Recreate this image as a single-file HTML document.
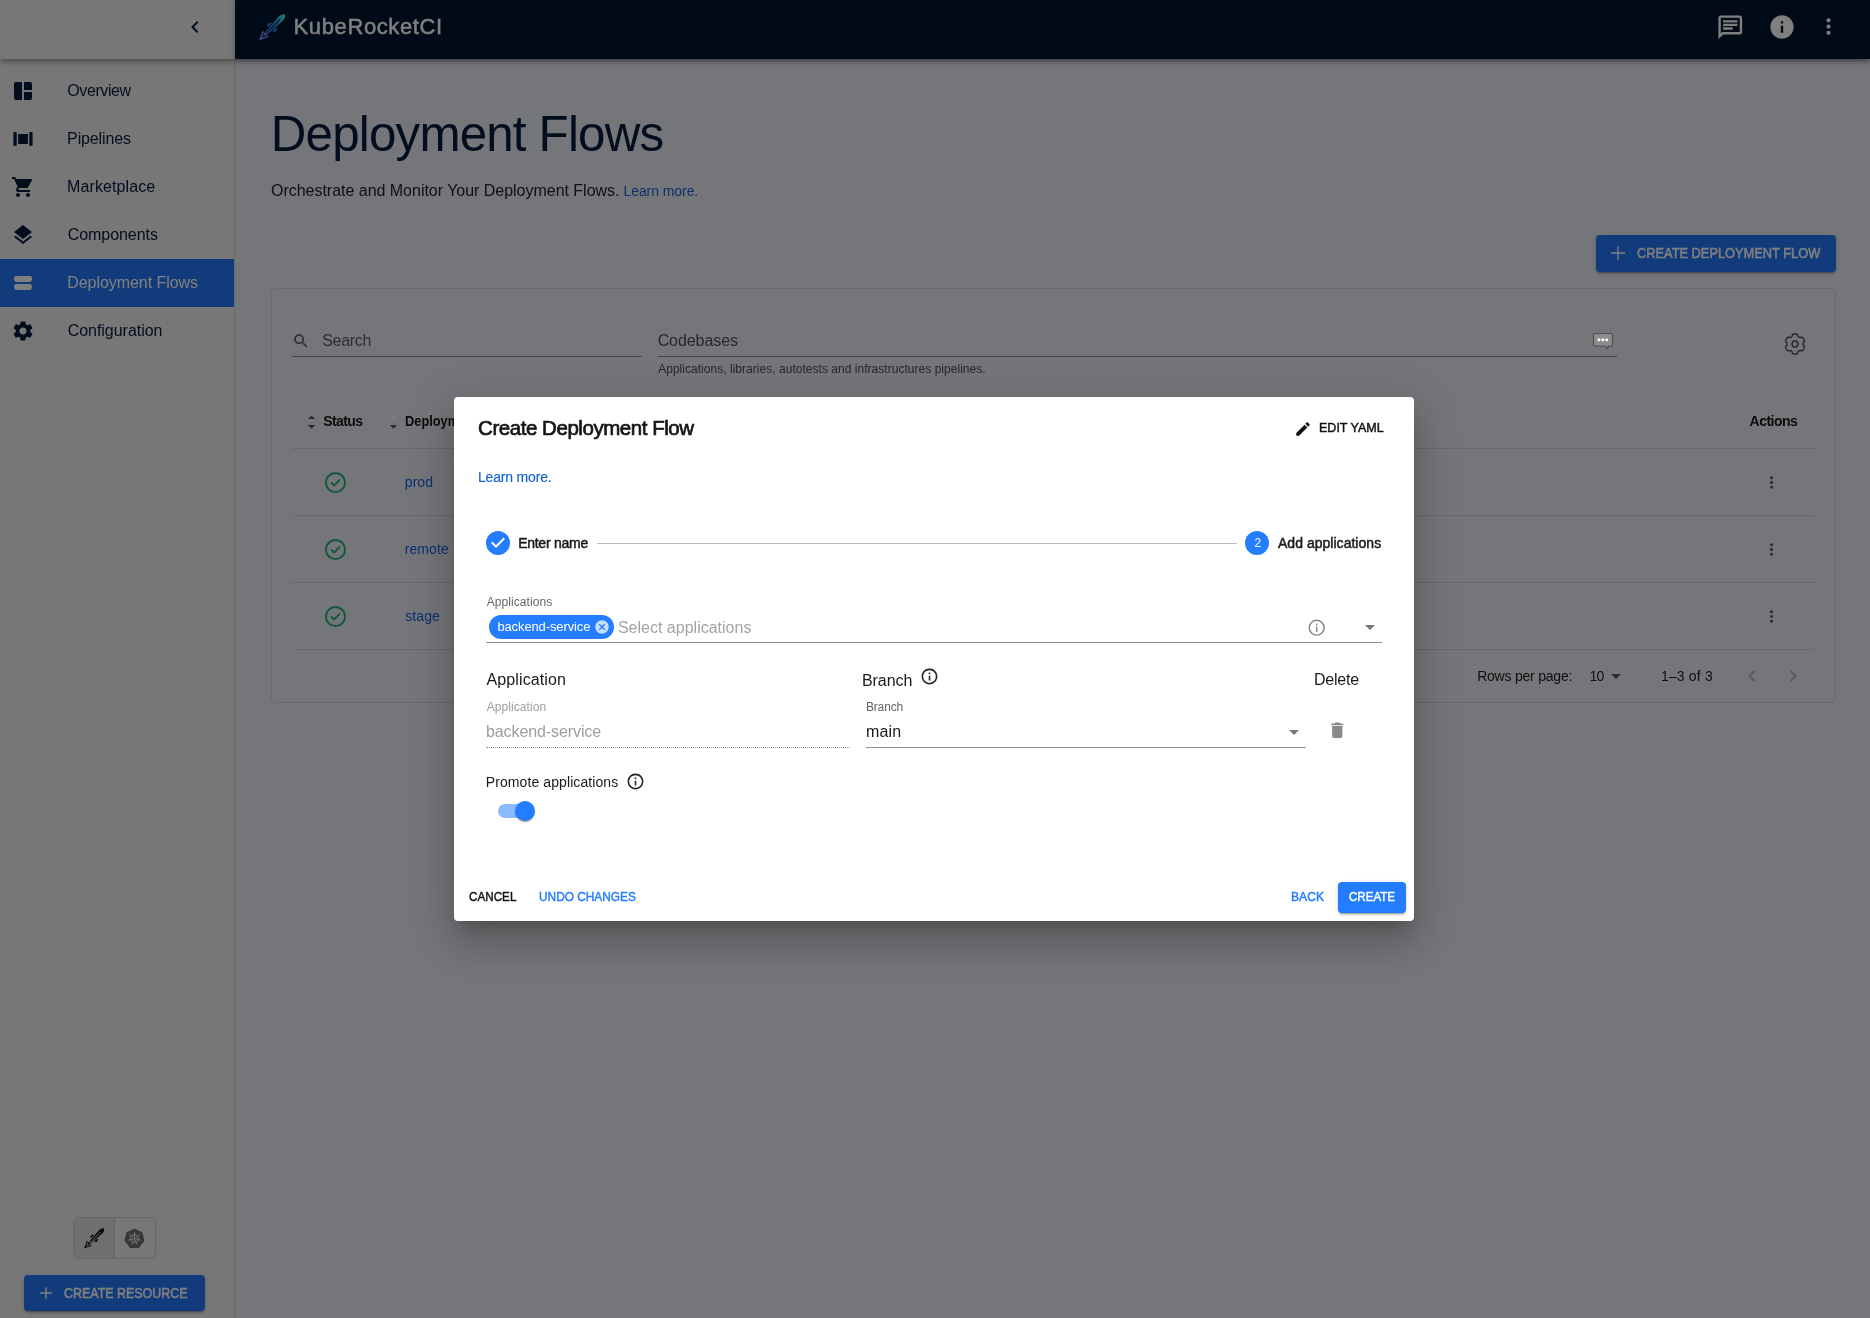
<!DOCTYPE html>
<html lang="en"><head><meta charset="utf-8"><title>KubeRocketCI - Deployment Flows</title>
<style>
html,body{margin:0;padding:0}
body{width:1870px;height:1318px;overflow:hidden;position:relative;font-family:"Liberation Sans",Arial,sans-serif;background:#eaecf3}
.b{position:absolute;display:block}
.t{position:absolute;white-space:nowrap;line-height:1;display:block}
#base,#top,#over{position:absolute;left:0;top:0;width:1870px;height:1318px;overflow:hidden;will-change:transform}
#backdrop{position:absolute;left:0;top:0;width:1870px;height:1318px;background:rgba(0,0,0,.5)}
</style></head>
<body>
<div id="base">
<div class="b" style="left:0px;top:0px;width:1870px;height:1318px;background:#eaecf3;"></div>
<div class="b" style="left:0px;top:0px;width:235px;height:1318px;background:#efefef;border-right:1px solid #d2d2d2;box-sizing:border-box;"></div>
<div class="b" style="left:0px;top:259px;width:234px;height:48px;background:#2476f6;"></div>
<span class="t" id="t1" style="left:67.22px;top:82.76px;font-size:16px;color:#041c3a;letter-spacing:-0.393px;">Overview</span>
<span class="t" id="t2" style="left:67.10px;top:130.76px;font-size:16px;color:#041c3a;letter-spacing:-0.124px;">Pipelines</span>
<span class="t" id="t3" style="left:67.10px;top:178.76px;font-size:16px;color:#041c3a;letter-spacing:0.092px;">Marketplace</span>
<span class="t" id="t4" style="left:67.68px;top:226.76px;font-size:16px;color:#041c3a;letter-spacing:-0.049px;">Components</span>
<span class="t" id="t5" style="left:67.23px;top:274.76px;font-size:16px;color:#fff;letter-spacing:-0.057px;">Deployment Flows</span>
<span class="t" id="t6" style="left:67.68px;top:322.76px;font-size:16px;color:#041c3a;letter-spacing:-0.033px;">Configuration</span>
<svg class="b" style="left:11.00px;top:79.00px;" width="24" height="24" viewBox="0 0 24 24"><path fill="#041c3a" d="M5 3h6v18H5a2 2 0 0 1-2-2V5a2 2 0 0 1 2-2zM13 3h6a2 2 0 0 1 2 2v6h-8zM13 13h8v6a2 2 0 0 1-2 2h-6z"/></svg>
<svg class="b" style="left:11.00px;top:127.00px;" width="24" height="24" viewBox="0 0 24 24"><g fill="#041c3a"><rect x="2.4" y="5" width="3.3" height="14" rx="1.3"/><rect x="7.2" y="7" width="9.7" height="10"/><rect x="18.3" y="5" width="3.3" height="14" rx="1.3"/></g></svg>
<svg class="b" style="left:11.00px;top:175.00px;" width="24" height="24" viewBox="0 0 24 24"><path fill="#041c3a" d="M7 18c-1.1 0-1.99.9-1.99 2S5.9 22 7 22s2-.9 2-2-.9-2-2-2zM1 2v2h2l3.6 7.59-1.35 2.45c-.16.28-.25.61-.25.96 0 1.1.9 2 2 2h12v-2H7.42c-.14 0-.25-.11-.25-.25l.03-.12.9-1.63h7.45c.75 0 1.41-.41 1.75-1.03l3.58-6.49c.08-.14.12-.31.12-.48 0-.55-.45-1-1-1H5.21l-.94-2H1zm16 16c-1.1 0-1.99.9-1.99 2s.89 2 1.99 2 2-.9 2-2-.9-2-2-2z"/></svg>
<svg class="b" style="left:11.00px;top:223.00px;" width="24" height="24" viewBox="0 0 24 24"><path fill="#041c3a" d="m11.99 18.54-7.37-5.73L3 14.07l9 7 9-7-1.63-1.27-7.38 5.74zM12 16l7.36-5.73L21 9l-9-7-9 7 1.63 1.27L12 16z"/></svg>
<svg class="b" style="left:11.00px;top:271.00px;" width="24" height="24" viewBox="0 0 24 24"><g fill="#fff"><rect x="3" y="5" width="18" height="6" rx="2.4"/><rect x="3" y="13" width="18" height="6" rx="2.4"/></g></svg>
<svg class="b" style="left:11.00px;top:319.00px;" width="24" height="24" viewBox="0 0 24 24"><path fill="#041c3a" d="M19.14 12.94c.04-.3.06-.61.06-.94 0-.32-.02-.64-.07-.94l2.03-1.58c.18-.14.23-.41.12-.61l-1.92-3.32c-.12-.22-.37-.29-.59-.22l-2.39.96c-.5-.38-1.03-.7-1.62-.94l-.36-2.54c-.04-.24-.24-.41-.48-.41h-3.84c-.24 0-.43.17-.47.41l-.36 2.54c-.59.24-1.13.57-1.62.94l-2.39-.96c-.22-.08-.47 0-.59.22L2.74 8.87c-.12.21-.08.47.12.61l2.03 1.58c-.05.3-.09.63-.09.94s.02.64.07.94l-2.03 1.58c-.18.14-.23.41-.12.61l1.92 3.32c.12.22.37.29.59.22l2.39-.96c.5.38 1.03.7 1.62.94l.36 2.54c.05.24.24.41.48.41h3.84c.24 0 .44-.17.47-.41l.36-2.54c.59-.24 1.13-.56 1.62-.94l2.39.96c.22.08.47 0 .59-.22l1.92-3.32c.12-.22.07-.47-.12-.61l-2.01-1.58zM12 15.6c-1.98 0-3.6-1.62-3.6-3.6s1.62-3.6 3.6-3.6 3.6 1.62 3.6 3.6-1.62 3.6-3.6 3.6z"/></svg>
<div class="b" style="left:73px;top:1217px;width:83px;height:42px;border:1px solid #d0d0d0;border-radius:5px;box-sizing:border-box;overflow:hidden;"><div class="b" style="left:0;top:0;width:40px;height:40px;background:#dedede;border-right:1px solid #cfcfcf"></div></div>
<svg class="b" style="left:83.70px;top:1227.80px;" width="20.5" height="20.5" viewBox="-50 -50 100 100"><g transform="rotate(45)" fill="#161616" fill-rule="evenodd"><path d="M0 -69 C8 -63 11 -55 11 -46 L6 27 L-6 27 L-11 -46 C-11 -55 -8 -63 0 -69 Z M-1.6 -42 L-1.6 27 L1.6 27 L1.6 -42 Z"/><path d="M-12 -12 L-20 -4 L-20 9 L-10.5 9 Z M12 -12 L20 -4 L20 9 L10.5 9 Z"/><path d="M-17 34 L0 70 L17 34 L10 34 L0 57 L-10 34 Z"/><path d="M-8 30 L0 49 L8 30 Z"/></g></svg>
<svg class="b" style="left:124.00px;top:1227.50px;" width="21" height="21" viewBox="-56 -54 112 112"><polygon points="0.0,-47.0 39.1,-28.2 48.7,14.1 21.7,48.0 -21.7,48.0 -48.7,14.1 -39.1,-28.2" fill="#6e6e6e" stroke="#6e6e6e" stroke-width="8" stroke-linejoin="round"/><g stroke="#efefef" stroke-width="5" fill="none" stroke-linecap="round"><circle cx="0" cy="3" r="22"/><line x1="0.0" y1="-5.0" x2="0.0" y2="-31.0"/><line x1="6.3" y1="-2.0" x2="26.6" y2="-18.2"/><line x1="7.8" y1="4.8" x2="33.1" y2="10.6"/><line x1="3.5" y1="10.2" x2="14.8" y2="33.6"/><line x1="-3.5" y1="10.2" x2="-14.8" y2="33.6"/><line x1="-7.8" y1="4.8" x2="-33.1" y2="10.6"/><line x1="-6.3" y1="-2.0" x2="-26.6" y2="-18.2"/></g><circle cx="0" cy="3" r="5" fill="#efefef"/></svg>
<div class="b" style="left:24px;top:1275px;width:181px;height:36px;background:#2476f6;border-radius:4px;box-shadow:0 3px 1px -2px rgba(0,0,0,.2),0 2px 2px 0 rgba(0,0,0,.14),0 1px 5px 0 rgba(0,0,0,.12);"></div>
<svg class="b" style="left:38.00px;top:1285.00px;" width="16" height="16" viewBox="0 0 16 16"><path d="M8 2.2v11.6M2.2 8h11.6" stroke="#fff" stroke-width="1.4" fill="none"/></svg>
<span class="t" id="t7" style="left:64.10px;top:1286.15px;font-size:14px;color:#fff;-webkit-text-stroke:0.48px currentColor;transform:scaleX(0.8891);transform-origin:0 0;">CREATE RESOURCE</span>
<div class="b" style="left:0px;top:0px;width:1870px;height:59px;box-shadow:0 2px 4px -1px rgba(0,0,0,.2),0 4px 5px 0 rgba(0,0,0,.14),0 1px 10px 0 rgba(0,0,0,.12);"><div class="b" style="left:0;top:0;width:235px;height:59px;background:#efefef"></div><div class="b" style="left:235px;top:0;width:1635px;height:59px;background:#00162f;box-shadow:-1px 0 5px rgba(0,0,0,.22)"></div></div>
<svg class="b" style="left:183.30px;top:15.30px;" width="24" height="24" viewBox="0 0 24 24"><path fill="#041c3a" d="M15.41 7.41 14 6l-6 6 6 6 1.41-1.41L10.83 12z"/></svg>
<svg class="b" style="left:258.80px;top:13.80px;" width="26.5" height="26.5" viewBox="-50 -50 100 100"><defs><linearGradient id="rg" gradientUnits="userSpaceOnUse" x1="0" y1="-66" x2="0" y2="66"><stop offset="0" stop-color="#3ff0e6"/><stop offset="0.5" stop-color="#2b7cf0"/><stop offset="1" stop-color="#a48cff"/></linearGradient></defs><g transform="rotate(45)" fill="url(#rg)" fill-rule="evenodd"><path d="M0 -69 C8 -63 11 -55 11 -46 L6 27 L-6 27 L-11 -46 C-11 -55 -8 -63 0 -69 Z M-1.6 -42 L-1.6 27 L1.6 27 L1.6 -42 Z"/><path d="M-12 -12 L-20 -4 L-20 9 L-10.5 9 Z M12 -12 L20 -4 L20 9 L10.5 9 Z"/><path d="M-17 34 L0 70 L17 34 L10 34 L0 57 L-10 34 Z"/><path d="M-8 30 L0 49 L8 30 Z"/></g></svg>
<span class="t" id="t8" style="left:293.60px;top:15.78px;font-size:22px;color:#fff;letter-spacing:0.604px;-webkit-text-stroke:0.45px #fff;">KubeRocketCI</span>
<svg class="b" style="left:1715.55px;top:13.15px;" width="28.5" height="28.5" viewBox="0 0 24 24"><path fill="#fff" d="M4 4h16v12H5.17L4 17.17V4m0-2c-1.1 0-1.99.9-1.99 2L2 22l4-4h14c1.1 0 2-.9 2-2V4c0-1.1-.9-2-2-2H4zm2 10h8v2H6v-2zm0-3h12v2H6V9zm0-3h12v2H6V6z"/></svg>
<svg class="b" style="left:1767.70px;top:13.00px;" width="28" height="28" viewBox="0 0 24 24"><path fill="#fff" d="M12 2C6.48 2 2 6.48 2 12s4.48 10 10 10 10-4.48 10-10S17.52 2 12 2zm1 15h-2v-6h2v6zm0-8h-2V7h2v2z"/></svg>
<svg class="b" style="left:1815.80px;top:13.90px;" width="25" height="25" viewBox="0 0 24 24"><path fill="#fff" d="M12 8c1.1 0 2-.9 2-2s-.9-2-2-2-2 .9-2 2 .9 2 2 2zm0 2c-1.1 0-2 .9-2 2s.9 2 2 2 2-.9 2-2-.9-2-2-2zm0 6c-1.1 0-2 .9-2 2s.9 2 2 2 2-.9 2-2-.9-2-2-2z"/></svg>
<span class="t" id="t9" style="left:270.83px;top:109.27px;font-size:49.3px;color:#041c3a;letter-spacing:-0.815px;">Deployment Flows</span>
<span class="t" id="t10" style="left:271.02px;top:183.26px;font-size:16px;color:#222;letter-spacing:-0.023px;">Orchestrate and Monitor Your Deployment Flows.</span>
<span class="t" id="t11" style="left:623.47px;top:184.15px;font-size:14px;color:#1b5fe0;letter-spacing:-0.072px;">Learn more.</span>
<div class="b" style="left:1596px;top:235px;width:240px;height:37px;background:#2476f6;border-radius:4px;box-shadow:0 3px 1px -2px rgba(0,0,0,.2),0 2px 2px 0 rgba(0,0,0,.14),0 1px 5px 0 rgba(0,0,0,.12);"></div>
<svg class="b" style="left:1609.70px;top:245.30px;" width="16" height="16" viewBox="0 0 16 16"><path d="M8 1v14M1 8h14" stroke="#fff" stroke-width="1.3" fill="none"/></svg>
<span class="t" id="t12" style="left:1637.06px;top:246.45px;font-size:14px;color:#fff;-webkit-text-stroke:0.48px currentColor;transform:scaleX(0.9154);transform-origin:0 0;">CREATE DEPLOYMENT FLOW</span>
<div class="b" style="left:271px;top:288px;width:1565px;height:415px;border:1px solid #d3d5db;border-radius:5px;box-sizing:border-box;"></div>
<svg class="b" style="left:291.50px;top:332.00px;" width="18" height="18" viewBox="0 0 24 24"><path fill="#555" d="M15.5 14h-.79l-.28-.27C15.41 12.59 16 11.11 16 9.5 16 5.91 13.09 3 9.5 3S3 5.91 3 9.5 5.91 16 9.5 16c1.61 0 3.09-.59 4.23-1.57l.27.28v.79l5 4.99L20.49 19l-4.99-5zm-6 0C7.01 14 5 11.99 5 9.5S7.01 5 9.5 5 14 7.01 14 9.5 11.99 14 9.5 14z"/></svg>
<span class="t" id="t13" style="left:322.15px;top:333.06px;font-size:16px;color:#5c5c5e;letter-spacing:-0.274px;">Search</span>
<div class="b" style="left:292px;top:356px;width:350px;height:1px;background:#878a8f;"></div>
<span class="t" id="t14" style="left:657.63px;top:333.36px;font-size:16px;color:#505154;letter-spacing:-0.069px;">Codebases</span>
<div class="b" style="left:658px;top:356px;width:959px;height:1px;background:#878a8f;"></div>
<span class="t" id="t15" style="left:658.16px;top:363.04px;font-size:12px;color:#4c4d50;letter-spacing:0.031px;">Applications, libraries, autotests and infrastructures pipelines.</span>
<svg class="b" style="left:1782.00px;top:330.90px;" width="26" height="26" viewBox="-13 -13 26 26"><g fill="none" stroke="#4a4a4c" stroke-width="1.4" stroke-linejoin="round"><path d="M8.02 0.00 L8.03 0.28 L8.04 0.56 L8.07 0.85 L8.16 1.15 L8.35 1.47 L8.67 1.84 L9.05 2.26 L9.31 2.67 L9.40 3.05 L9.37 3.41 L9.28 3.75 L9.16 4.08 L9.02 4.40 L8.87 4.71 L8.70 5.02 L8.51 5.32 L8.32 5.61 L8.11 5.90 L7.89 6.17 L7.64 6.41 L7.35 6.61 L6.97 6.73 L6.48 6.71 L5.93 6.59 L5.45 6.49 L5.07 6.49 L4.77 6.57 L4.51 6.68 L4.26 6.81 L4.01 6.95 L3.77 7.09 L3.53 7.24 L3.30 7.41 L3.09 7.64 L2.90 7.96 L2.74 8.43 L2.57 8.96 L2.34 9.40 L2.06 9.67 L1.73 9.82 L1.39 9.92 L1.05 9.98 L0.70 10.01 L0.35 10.03 L0.00 10.04 L-0.35 10.03 L-0.70 10.01 L-1.05 9.98 L-1.39 9.92 L-1.73 9.82 L-2.06 9.67 L-2.34 9.40 L-2.57 8.96 L-2.74 8.43 L-2.90 7.96 L-3.09 7.64 L-3.30 7.41 L-3.53 7.24 L-3.77 7.09 L-4.01 6.95 L-4.26 6.81 L-4.51 6.68 L-4.77 6.57 L-5.07 6.49 L-5.45 6.49 L-5.93 6.59 L-6.48 6.71 L-6.97 6.73 L-7.35 6.61 L-7.64 6.41 L-7.89 6.17 L-8.11 5.90 L-8.32 5.61 L-8.51 5.32 L-8.70 5.02 L-8.87 4.71 L-9.02 4.40 L-9.16 4.08 L-9.28 3.75 L-9.37 3.41 L-9.40 3.05 L-9.31 2.67 L-9.05 2.26 L-8.67 1.84 L-8.35 1.47 L-8.16 1.15 L-8.07 0.85 L-8.04 0.56 L-8.03 0.28 L-8.02 0.00 L-8.03 -0.28 L-8.04 -0.56 L-8.07 -0.85 L-8.16 -1.15 L-8.35 -1.47 L-8.67 -1.84 L-9.05 -2.26 L-9.31 -2.67 L-9.40 -3.05 L-9.37 -3.41 L-9.28 -3.75 L-9.16 -4.08 L-9.02 -4.40 L-8.87 -4.71 L-8.70 -5.02 L-8.51 -5.32 L-8.32 -5.61 L-8.11 -5.90 L-7.89 -6.17 L-7.64 -6.41 L-7.35 -6.61 L-6.97 -6.73 L-6.48 -6.71 L-5.93 -6.59 L-5.45 -6.49 L-5.07 -6.49 L-4.77 -6.57 L-4.51 -6.68 L-4.26 -6.81 L-4.01 -6.95 L-3.77 -7.09 L-3.53 -7.24 L-3.30 -7.41 L-3.09 -7.64 L-2.90 -7.96 L-2.74 -8.43 L-2.57 -8.96 L-2.34 -9.40 L-2.06 -9.67 L-1.73 -9.82 L-1.39 -9.92 L-1.05 -9.98 L-0.70 -10.01 L-0.35 -10.03 L-0.00 -10.04 L0.35 -10.03 L0.70 -10.01 L1.05 -9.98 L1.39 -9.92 L1.73 -9.82 L2.06 -9.67 L2.34 -9.40 L2.57 -8.96 L2.74 -8.43 L2.90 -7.96 L3.09 -7.64 L3.30 -7.41 L3.53 -7.24 L3.77 -7.09 L4.01 -6.95 L4.26 -6.81 L4.51 -6.68 L4.77 -6.57 L5.07 -6.49 L5.45 -6.49 L5.93 -6.59 L6.48 -6.71 L6.97 -6.73 L7.35 -6.61 L7.64 -6.41 L7.89 -6.17 L8.11 -5.90 L8.32 -5.61 L8.51 -5.32 L8.70 -5.02 L8.87 -4.71 L9.02 -4.40 L9.16 -4.08 L9.28 -3.75 L9.37 -3.41 L9.40 -3.05 L9.31 -2.67 L9.05 -2.26 L8.67 -1.84 L8.35 -1.47 L8.16 -1.15 L8.07 -0.85 L8.04 -0.56 L8.03 -0.28Z"/><circle cx="0" cy="0" r="3"/></g></svg>
<svg class="b" style="left:307.30px;top:414.00px;" width="9" height="16" viewBox="0 0 9 16"><path d="M0.8 5 L4.5 1.4 L8.2 5Z M0.8 11 L4.5 14.7 L8.2 11Z" fill="#55565a"/></svg>
<span class="t" id="t16" style="left:323.16px;top:414.15px;font-size:14px;color:#161616;font-weight:700;letter-spacing:-0.582px;">Status</span>
<svg class="b" style="left:389.30px;top:414.00px;" width="9" height="16" viewBox="0 0 9 16"><path d="M0.8 5 L4.5 1.4 L8.2 5Z" fill="#fbfbfd"/><path d="M0.8 11 L4.5 14.7 L8.2 11Z" fill="#55565a"/></svg>
<span class="t" id="t17" style="left:404.60px;top:414.15px;font-size:14px;color:#161616;font-weight:700;transform:scaleX(0.915);transform-origin:0 0;">Deployment Flow</span>
<span class="t" id="t18" style="left:1749.54px;top:414.45px;font-size:14px;color:#161616;font-weight:700;letter-spacing:-0.500px;">Actions</span>
<div class="b" style="left:292px;top:448px;width:1523px;height:1px;background:#d4d4d4;"></div>
<svg class="b" style="left:323.80px;top:470.70px;" width="23" height="23" viewBox="0 0 24 24"><g fill="none" stroke="#22b17a" stroke-width="2" stroke-linecap="round" stroke-linejoin="round"><circle cx="12" cy="12" r="10"/><path d="M7.9 12.5 L10.5 15.1 L16.1 9.5"/></g></svg>
<span class="t" id="t19" style="left:404.82px;top:475.15px;font-size:14px;color:#1b5fe0;letter-spacing:0.042px;">prod</span>
<svg class="b" style="left:1762.30px;top:472.50px;" width="19" height="19" viewBox="0 0 24 24"><path fill="#56565a" d="M12 8c1.1 0 2-.9 2-2s-.9-2-2-2-2 .9-2 2 .9 2 2 2zm0 2c-1.1 0-2 .9-2 2s.9 2 2 2 2-.9 2-2-.9-2-2-2zm0 6c-1.1 0-2 .9-2 2s.9 2 2 2 2-.9 2-2-.9-2-2-2z"/></svg>
<svg class="b" style="left:323.80px;top:537.70px;" width="23" height="23" viewBox="0 0 24 24"><g fill="none" stroke="#22b17a" stroke-width="2" stroke-linecap="round" stroke-linejoin="round"><circle cx="12" cy="12" r="10"/><path d="M7.9 12.5 L10.5 15.1 L16.1 9.5"/></g></svg>
<span class="t" id="t20" style="left:404.65px;top:542.15px;font-size:14px;color:#1b5fe0;letter-spacing:0.12px;">remote</span>
<svg class="b" style="left:1762.30px;top:539.50px;" width="19" height="19" viewBox="0 0 24 24"><path fill="#56565a" d="M12 8c1.1 0 2-.9 2-2s-.9-2-2-2-2 .9-2 2 .9 2 2 2zm0 2c-1.1 0-2 .9-2 2s.9 2 2 2 2-.9 2-2-.9-2-2-2zm0 6c-1.1 0-2 .9-2 2s.9 2 2 2 2-.9 2-2-.9-2-2-2z"/></svg>
<svg class="b" style="left:323.80px;top:604.70px;" width="23" height="23" viewBox="0 0 24 24"><g fill="none" stroke="#22b17a" stroke-width="2" stroke-linecap="round" stroke-linejoin="round"><circle cx="12" cy="12" r="10"/><path d="M7.9 12.5 L10.5 15.1 L16.1 9.5"/></g></svg>
<span class="t" id="t21" style="left:405.22px;top:609.15px;font-size:14px;color:#1b5fe0;letter-spacing:0.086px;">stage</span>
<svg class="b" style="left:1762.30px;top:606.50px;" width="19" height="19" viewBox="0 0 24 24"><path fill="#56565a" d="M12 8c1.1 0 2-.9 2-2s-.9-2-2-2-2 .9-2 2 .9 2 2 2zm0 2c-1.1 0-2 .9-2 2s.9 2 2 2 2-.9 2-2-.9-2-2-2zm0 6c-1.1 0-2 .9-2 2s.9 2 2 2 2-.9 2-2-.9-2-2-2z"/></svg>
<div class="b" style="left:292px;top:515px;width:1523px;height:1px;background:#d4d4d4;"></div>
<div class="b" style="left:292px;top:582px;width:1523px;height:1px;background:#d4d4d4;"></div>
<div class="b" style="left:294px;top:649px;width:1518px;height:1px;background:#d4d4d4;"></div>
<span class="t" id="t22" style="left:1477.15px;top:668.85px;font-size:14px;color:#222;letter-spacing:-0.215px;">Rows per page:</span>
<span class="t" id="t23" style="left:1589.48px;top:668.85px;font-size:14px;color:#222;letter-spacing:-0.740px;">10</span>
<svg class="b" style="left:1604.20px;top:664.00px;" width="24" height="24" viewBox="0 0 24 24"><path fill="#555" d="m7 10 5 5 5-5z"/></svg>
<span class="t" id="t24" style="left:1660.97px;top:668.85px;font-size:14px;color:#222;letter-spacing:0.160px;">1–3 of 3</span>
<svg class="b" style="left:1740.30px;top:663.80px;" width="24" height="24" viewBox="0 0 24 24"><path fill="#b4b4b4" d="M15.41 16.59 10.83 12l4.58-4.59L14 6l-6 6 6 6 1.41-1.41z"/></svg>
<svg class="b" style="left:1781.00px;top:663.80px;" width="24" height="24" viewBox="0 0 24 24"><path fill="#b4b4b4" d="M8.59 16.59 13.17 12 8.59 7.41 10 6l6 6-6 6-1.41-1.41z"/></svg>
</div>
<div id="backdrop"></div>
<div id="over">
<svg class="b" style="left:1592.00px;top:332.00px;" width="22" height="18" viewBox="0 0 22 18"><path d="M3 1.5h16a1.5 1.5 0 0 1 1.5 1.5v9.5a1.5 1.5 0 0 1-1.5 1.5h-2.5l-1 2.8-1.8-2.8H3a1.5 1.5 0 0 1-1.5-1.5V3A1.5 1.5 0 0 1 3 1.5z" fill="#8c8c8c" stroke="#4e4f52" stroke-width="1.2"/><g fill="#fff"><circle cx="7" cy="7.7" r="1.5"/><circle cx="10.9" cy="7.7" r="1.5"/><circle cx="14.7" cy="7.7" r="1.5"/></g></svg>
</div>
<div id="top">
<div class="b" style="left:454px;top:397px;width:960px;height:524px;background:#fff;border-radius:4px;box-shadow:0 11px 15px -7px rgba(0,0,0,.2),0 24px 38px 3px rgba(0,0,0,.14),0 9px 46px 8px rgba(0,0,0,.12);"></div>
<span class="t" id="t25" style="left:478.10px;top:418.05px;font-size:20.5px;color:#151515;-webkit-text-stroke:0.70px currentColor;letter-spacing:-0.458px;">Create Deployment Flow</span>
<svg class="b" style="left:1294.40px;top:419.80px;" width="18" height="18" viewBox="0 0 24 24"><path fill="#111" d="M3 17.25V21h3.75L17.81 9.94l-3.75-3.75L3 17.25zM20.71 7.04c.39-.39.39-1.02 0-1.41l-2.34-2.34a.9959.9959 0 0 0-1.41 0l-1.83 1.83 3.75 3.75 1.83-1.83z"/></svg>
<span class="t" id="t26" style="left:1319.16px;top:421.00px;font-size:13px;color:#111;-webkit-text-stroke:0.44px currentColor;transform:scaleX(0.9631);transform-origin:0 0;">EDIT YAML</span>
<span class="t" id="t27" style="left:477.99px;top:470.35px;font-size:14px;color:#1161d6;letter-spacing:-0.182px;-webkit-text-stroke:0.15px #1161d6;">Learn more.</span>
<svg class="b" style="left:485.80px;top:531.00px;" width="24" height="24" viewBox="0 0 24 24"><path fill="#247dff" d="M12 0a12 12 0 1 0 0 24 12 12 0 0 0 0-24zm-2 17l-5-5 1.4-1.4 3.6 3.6 7.6-7.6L19 8l-9 9z"/></svg>
<span class="t" id="t28" style="left:518.14px;top:536.45px;font-size:14px;color:#1a1a1a;-webkit-text-stroke:0.48px currentColor;letter-spacing:-0.259px;">Enter name</span>
<div class="b" style="left:597px;top:543px;width:640px;height:1px;background:#bdbdbd;"></div>
<div class="b" style="left:1245px;top:531px;width:24px;height:24px;background:#247dff;border-radius:50%;"></div>
<span class="t" id="t29" style="left:1254.48px;top:537.04px;font-size:12px;color:#fff;">2</span>
<span class="t" id="t30" style="left:1277.97px;top:536.45px;font-size:14px;color:#1a1a1a;-webkit-text-stroke:0.48px currentColor;letter-spacing:0.028px;">Add applications</span>
<span class="t" id="t31" style="left:486.71px;top:596.04px;font-size:12px;color:#666;letter-spacing:0.067px;">Applications</span>
<div class="b" style="left:489px;top:615px;width:125px;height:24px;background:#247dff;border-radius:12px;"></div>
<span class="t" id="t32" style="left:497.39px;top:620.00px;font-size:13px;color:#fff;letter-spacing:-0.112px;">backend-service</span>
<svg class="b" style="left:594.00px;top:618.80px;" width="16" height="16" viewBox="0 0 24 24"><path fill="rgba(255,255,255,.75)" d="M12 2C6.47 2 2 6.47 2 12s4.47 10 10 10 10-4.47 10-10S17.53 2 12 2zm5 13.59L15.59 17 12 13.41 8.41 17 7 15.59 10.59 12 7 8.41 8.41 7 12 10.59 15.59 7 17 8.41 13.41 12 17 15.59z"/></svg>
<span class="t" id="t33" style="left:617.92px;top:619.76px;font-size:16px;color:#a3a3a3;letter-spacing:0.006px;">Select applications</span>
<svg class="b" style="left:1306.90px;top:617.90px;" width="19.4" height="19.4" viewBox="0 0 24 24"><circle cx="12" cy="12" r="9.2" fill="none" stroke="#858585" stroke-width="1.8"/><rect x="11.1" y="10.6" width="1.8" height="6.6" fill="#858585"/><rect x="11.1" y="6.9" width="1.8" height="2" fill="#858585"/></svg>
<svg class="b" style="left:1358.00px;top:615.00px;" width="24" height="24" viewBox="0 0 24 24"><path fill="#757575" d="m7 10 5 5 5-5z"/></svg>
<div class="b" style="left:486px;top:642px;width:896px;height:1px;background:#8f8f8f;"></div>
<span class="t" id="t34" style="left:486.60px;top:671.76px;font-size:16px;color:#1a1a1a;letter-spacing:0.100px;">Application</span>
<span class="t" id="t35" style="left:861.90px;top:672.76px;font-size:16px;color:#1a1a1a;letter-spacing:-0.053px;">Branch</span>
<svg class="b" style="left:919.60px;top:666.80px;" width="19" height="19" viewBox="0 0 24 24"><path fill="#222" d="M11 7h2v2h-2zm0 4h2v6h-2zm1-9C6.48 2 2 6.48 2 12s4.48 10 10 10 10-4.48 10-10S17.52 2 12 2zm0 18c-4.41 0-8-3.59-8-8s3.59-8 8-8 8 3.59 8 8-3.59 8-8 8z"/></svg>
<span class="t" id="t36" style="left:1314.04px;top:671.76px;font-size:16px;color:#1a1a1a;letter-spacing:-0.222px;">Delete</span>
<span class="t" id="t37" style="left:486.71px;top:700.84px;font-size:12px;color:#9e9e9e;letter-spacing:0.075px;">Application</span>
<span class="t" id="t38" style="left:485.98px;top:724.46px;font-size:16px;color:#9e9e9e;letter-spacing:-0.093px;">backend-service</span>
<div class="b" style="left:486px;top:747px;width:364px;height:1px;border-top:1px dotted #8f8f8f;"></div>
<span class="t" id="t39" style="left:865.93px;top:700.84px;font-size:12px;color:#666;letter-spacing:-0.152px;">Branch</span>
<span class="t" id="t40" style="left:865.95px;top:724.46px;font-size:16px;color:#1a1a1a;letter-spacing:0.139px;">main</span>
<svg class="b" style="left:1282.00px;top:720.00px;" width="24" height="24" viewBox="0 0 24 24"><path fill="#757575" d="m7 10 5 5 5-5z"/></svg>
<div class="b" style="left:866px;top:747px;width:440px;height:1px;background:#8f8f8f;"></div>
<svg class="b" style="left:1326.75px;top:719.95px;" width="20.5" height="20.5" viewBox="0 0 24 24"><path fill="#8a8a8a" d="M6 19c0 1.1.9 2 2 2h8c1.1 0 2-.9 2-2V7H6v12zM19 4h-3.5l-1-1h-5l-1 1H5v2h14V4z"/></svg>
<span class="t" id="t41" style="left:485.80px;top:775.45px;font-size:14px;color:#1a1a1a;letter-spacing:0.089px;">Promote applications</span>
<svg class="b" style="left:625.60px;top:771.60px;" width="19" height="19" viewBox="0 0 24 24"><path fill="#222" d="M11 7h2v2h-2zm0 4h2v6h-2zm1-9C6.48 2 2 6.48 2 12s4.48 10 10 10 10-4.48 10-10S17.52 2 12 2zm0 18c-4.41 0-8-3.59-8-8s3.59-8 8-8 8 3.59 8 8-3.59 8-8 8z"/></svg>
<div class="b" style="left:498px;top:804px;width:34px;height:14px;background:#88bbff;border-radius:7px;"></div>
<div class="b" style="left:515px;top:801px;width:20px;height:20px;background:#247dff;border-radius:50%;box-shadow:0 2px 1px -1px rgba(0,0,0,.2),0 1px 1px 0 rgba(0,0,0,.14),0 1px 3px 0 rgba(0,0,0,.12);"></div>
<span class="t" id="t42" style="left:469.32px;top:890.00px;font-size:13px;color:#111;-webkit-text-stroke:0.44px currentColor;transform:scaleX(0.8990);transform-origin:0 0;">CANCEL</span>
<span class="t" id="t43" style="left:538.86px;top:890.00px;font-size:13px;color:#247dff;-webkit-text-stroke:0.44px currentColor;transform:scaleX(0.9128);transform-origin:0 0;">UNDO CHANGES</span>
<span class="t" id="t44" style="left:1290.91px;top:890.00px;font-size:13px;color:#247dff;-webkit-text-stroke:0.44px currentColor;transform:scaleX(0.9315);transform-origin:0 0;">BACK</span>
<div class="b" style="left:1338px;top:882px;width:68px;height:31px;background:#247dff;border-radius:4px;box-shadow:0 3px 1px -2px rgba(0,0,0,.2),0 2px 2px 0 rgba(0,0,0,.14),0 1px 5px 0 rgba(0,0,0,.12);"></div>
<span class="t" id="t45" style="left:1349.07px;top:890.00px;font-size:13px;color:#fff;-webkit-text-stroke:0.44px currentColor;transform:scaleX(0.8898);transform-origin:0 0;">CREATE</span>
</div>
</body></html>
